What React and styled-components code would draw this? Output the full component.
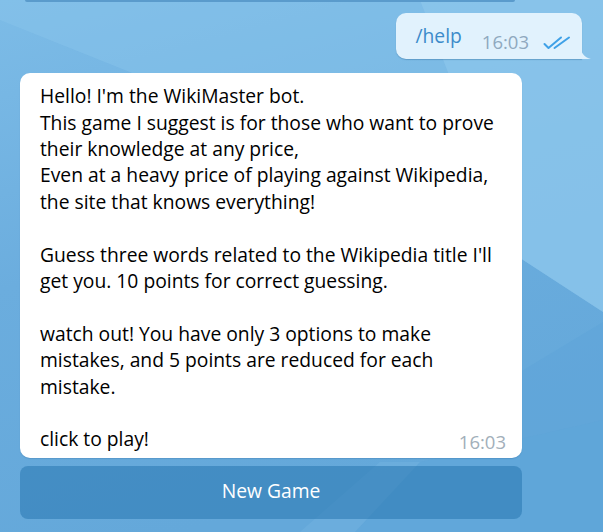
import React from "react";
import styled, { createGlobalStyle } from "styled-components";

const GlobalStyle = createGlobalStyle`
  html, body { margin: 0; padding: 0; }
  body { font-family: "Open Sans", "DejaVu Sans", sans-serif; }
`;

const Page = styled.div`
  position: relative;
  width: 603px;
  height: 532px;
  overflow: hidden;
`;

const Backdrop = styled.svg`
  position: absolute;
  inset: 0;
  width: 100%;
  height: 100%;
`;

const Feed = styled.div`
  position: relative;
  display: flex;
  flex-direction: column;
  padding: 0 21px 0 20px;
`;

const PrevEdge = styled.div`
  height: 2px;
  margin: 0 67px 0 5px;
  background: #5a9bcc;
  border-radius: 0 0 2px 2px;
`;

const OutRow = styled.div`
  display: flex;
  justify-content: flex-end;
  margin-top: 11px;
`;

const OutBubble = styled.div`
  position: relative;
  display: flex;
  align-items: flex-end;
  background: #e1f2fd;
  border-radius: 10px 10px 0 10px;
  padding: 10px 11px 8px 19px;
  box-shadow: 0 1px 1px rgba(40, 100, 150, 0.35);
`;

const Tail = styled.svg`
  position: absolute;
  right: -9px;
  bottom: 0;
  width: 10px;
  height: 12px;
`;

const OutText = styled.span`
  font-size: 19.3px;
  line-height: 26.1px;
  color: #3b8bca;
  margin-bottom: 2px;
`;

const Time = styled.span`
  font-size: 18.5px;
  line-height: 18px;
  color: ${(p) => p.$color};
  margin-left: ${(p) => p.$gap || 0}px;
  margin-bottom: ${(p) => p.$drop || 0}px;
`;

const Checks = styled.svg`
  width: 28px;
  height: 14px;
  margin-left: 14px;
  margin-bottom: 1px;
`;

const InColumn = styled.div`
  display: flex;
  flex-direction: column;
  width: 502px;
  margin-top: 14px;
`;

const InBubble = styled.div`
  display: flex;
  flex-direction: column;
  align-items: flex-start;
  background: #ffffff;
  border-radius: 10px;
  padding: 10px 16px 5px 20px;
  box-shadow: 0 1px 1px rgba(40, 100, 150, 0.25);
`;

const Line = styled.span`
  display: block;
  min-height: 26.4px;
  font-size: 19.3px;
  line-height: 26.4px;
  color: #000;
  white-space: pre;
`;

const LastRow = styled.div`
  align-self: stretch;
  display: flex;
  justify-content: space-between;
  align-items: flex-end;
`;

const KeyButton = styled.button`
  margin-top: 8px;
  height: 53px;
  border: none;
  border-radius: 8px;
  background: rgba(30, 110, 170, 0.47);
  color: #fff;
  font-family: "Open Sans", "DejaVu Sans", sans-serif;
  font-size: 19.3px;
  font-weight: 500;
  padding: 0 0 3px;
  cursor: pointer;
`;

const lines = [
  "Hello! I'm the WikiMaster bot.",
  "This game I suggest is for those who want to prove",
  "their knowledge at any price,",
  "Even at a heavy price of playing against Wikipedia,",
  "the site that knows everything!",
  "",
  "Guess three words related to the Wikipedia title I'll",
  "get you. 10 points for correct guessing.",
  "",
  "watch out! You have only 3 options to make",
  "mistakes, and 5 points are reduced for each",
  "mistake.",
  "",
];

export default function App() {
  return (
    <Page>
      <GlobalStyle />
      <Backdrop viewBox="0 0 603 532" preserveAspectRatio="none">
        <defs>
          <linearGradient id="bg" x1="0" y1="0" x2="0.3" y2="1">
            <stop offset="0" stopColor="#7dbce7" />
            <stop offset="0.5" stopColor="#6badde" />
            <stop offset="1" stopColor="#64a8da" />
          </linearGradient>
        </defs>
        <rect x="0" y="0" width="603" height="532" fill="url(#bg)" />
        <polygon points="0,0 603,0 603,312 520,258 300,140 0,20" fill="#8ac5eb" opacity="0.45" />
        <polygon points="420,0 603,0 603,312 520,258" fill="#8fc8ec" opacity="0.6" />
        <polygon points="520,372 603,322 603,532 520,532" fill="#5fa5d8" opacity="0.6" />
        <polygon points="355,532 420,462 603,420 603,532" fill="#5da5d9" opacity="0.5" />
        <polygon points="300,532 355,532 420,462 380,462" fill="#78b6e2" opacity="0.35" />
      </Backdrop>
      <Feed>
        <PrevEdge />
        <OutRow>
          <OutBubble>
            <OutText>/help</OutText>
            <Time $color="#8fa9bf" $gap={20}>16:03</Time>
            <Checks viewBox="0 0 28 14" fill="none" stroke="#3fa1e7" strokeWidth="2" strokeLinecap="round" strokeLinejoin="round">
              <path d="M1.5 8 L5.5 12 L18 1.5" />
              <path d="M11.5 12 L26 1.5" />
            </Checks>
            <Tail viewBox="0 0 10 12">
              <path d="M0 0 C0 6 3 10 10 12 L0 12 Z" fill="#e1f2fd" />
            </Tail>
          </OutBubble>
        </OutRow>
        <InColumn>
          <InBubble>
            {lines.map((l, i) => (
              <Line key={i}>{l}</Line>
            ))}
            <LastRow>
              <Line>click to play!</Line>
              <Time $color="#a2afba" $drop={2}>16:03</Time>
            </LastRow>
          </InBubble>
          <KeyButton>New Game</KeyButton>
        </InColumn>
      </Feed>
    </Page>
  );
}
